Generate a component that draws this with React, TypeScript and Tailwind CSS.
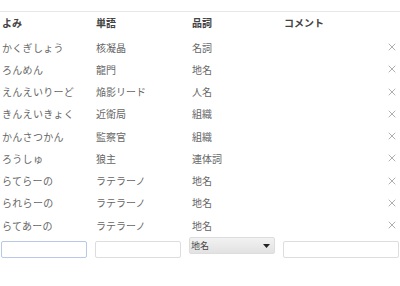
import { X } from 'lucide-react';

const rows = [
  { yomi: 'かくぎしょう', word: '核凝晶', pos: '名詞' },
  { yomi: 'ろんめん', word: '龍門', pos: '地名' },
  { yomi: 'えんえいりーど', word: '焔影リード', pos: '人名' },
  { yomi: 'きんえいきょく', word: '近衛局', pos: '組織' },
  { yomi: 'かんさつかん', word: '監察官', pos: '組織' },
  { yomi: 'ろうしゅ', word: '狼主', pos: '連体詞' },
  { yomi: 'らてらーの', word: 'ラテラーノ', pos: '地名' },
  { yomi: 'られらーの', word: 'ラテラーノ', pos: '地名' },
  { yomi: 'らてあーの', word: 'ラテラーノ', pos: '地名' },
];

const font = { fontFamily: '"Noto Sans CJK JP", "Noto Sans", sans-serif' };

export default function App() {
  return (
    <div className="w-[400px] h-[286px] bg-white pt-[11px]" style={font}>
      <div className="border-t border-[#e8e8e8]">
        {/* Header */}
        <div className="grid grid-cols-[94px_94px_92px_1fr] h-[24px] items-center pb-[4px] text-[10px] font-bold text-[#444]">
          <div className="pl-[2px]">よみ</div>
          <div className="pl-[2px]">単語</div>
          <div className="pl-[4px]">品詞</div>
          <div className="pl-[4px]">コメント</div>
        </div>

        {rows.map((r, i) => (
          <div
            key={i}
            className="grid grid-cols-[94px_94px_92px_1fr_16px] h-[22.25px] items-center text-[10px] text-[#666]"
          >
            <div className="pl-[2px] tracking-[0.3px]">{r.yomi}</div>
            <div className="pl-[2px]">{r.word}</div>
            <div className="pl-[4px]">{r.pos}</div>
            <div />
            <button className="flex items-center justify-center text-[#9a9a9a]">
              <X size={12} strokeWidth={1.6} />
            </button>
          </div>
        ))}

        {/* Input row */}
        <div className="grid grid-cols-[94px_94px_94px_1fr] items-start pt-[1px] pr-[1px]">
          <div className="pl-[1px] pr-[7px]">
            <input className="w-full h-[17px] border border-[#b8c8e8] rounded-[2px] bg-white outline-none" />
          </div>
          <div className="pl-[1px] pr-[7px]">
            <input className="w-full h-[17px] border border-[#ddd] rounded-[2px] bg-white outline-none" />
          </div>
          <div className="pl-[1px] pr-[7px]">
            <div className="flex items-center justify-between h-[17px] border border-[#ddd] rounded-[2px] bg-gradient-to-b from-[#f2f2f2] to-[#e2e2e2] px-[1px] text-[9px] text-[#444]">
              <span>地名</span>
              <svg width="7" height="4" viewBox="0 0 7 4" className="mr-[3px]">
                <path d="M0 0h7L3.5 4z" fill="#222" />
              </svg>
            </div>
          </div>
          <div className="pl-[1px]">
            <input className="w-full h-[17px] border border-[#ddd] rounded-[2px] bg-white outline-none" />
          </div>
        </div>
      </div>
    </div>
  );
}
